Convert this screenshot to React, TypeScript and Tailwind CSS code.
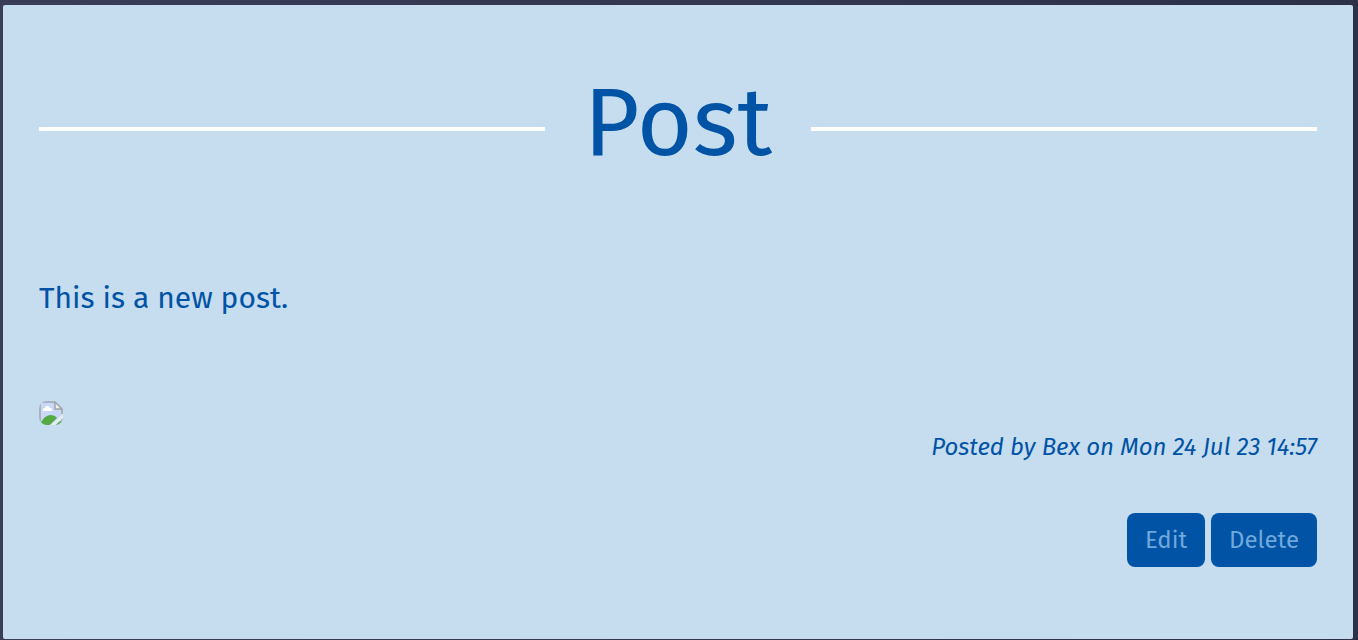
import React from "react";

function MissingImageIcon() {
  return (
    <svg viewBox="0 0 24 24" className="size-6 rounded-lg" role="img" aria-label="Post attachment">
      <path d="M1 1H16L23 8V23H1Z" fill="#c9d8f6" />
      <path d="M4 10Q3 7 6 7Q7 4 9 5Q11 6 11 7Q14 7 13 10Z" fill="#fff" />
      <path d="M1 24Q4 15 11 14Q16 14 18 17L11 24Z" fill="#54ab43" />
      <path d="M11 24L24 13V17L16 24Z" fill="#e3edf5" />
      <path d="M17 24Q20 20 23 20V24Z" fill="#54ab43" />
      <path d="M16 1V8H23Z" fill="#f2f2f2" />
      <path d="M1 23V1H16L23 8V13M16 1V8H23M23 18V23" fill="none" stroke="#a0a4a8" strokeWidth="1.5" />
    </svg>
  );
}

function ActionButton({ label }: { label: string }) {
  return (
    <button type="button" className="h-[54px] rounded-lg bg-[#0053a5] px-[18px] text-2xl text-[#6fa8dc]">
      {label}
    </button>
  );
}

export default function App() {
  return (
    <div className="min-h-screen bg-linear-to-r from-[#393d58] to-[#2d3148] pt-[5px] pr-[5px] pb-px pl-[3px] font-['Fira_Sans','Noto_Sans',sans-serif] text-[#0053a5]">
      <main className="rounded-xs bg-[#c6dcef] px-9 pt-[52px] pb-[72px]">
        <header className="flex items-center">
          <div className="h-1 flex-1 bg-white" />
          <h1 className="px-[39px] pb-3 text-8xl leading-[132px]">Post</h1>
          <div className="h-1 flex-1 bg-white" />
        </header>
        <p className="mt-[73px] text-3xl leading-[48px]">This is a new post.</p>
        <div className="mt-[79px]">
          <MissingImageIcon />
        </div>
        <p className="mt-1 text-right text-2xl leading-9 italic">Posted by Bex on Mon 24 Jul 23 14:57</p>
        <div className="mt-12 flex justify-end gap-1.5">
          <ActionButton label="Edit" />
          <ActionButton label="Delete" />
        </div>
      </main>
    </div>
  );
}
